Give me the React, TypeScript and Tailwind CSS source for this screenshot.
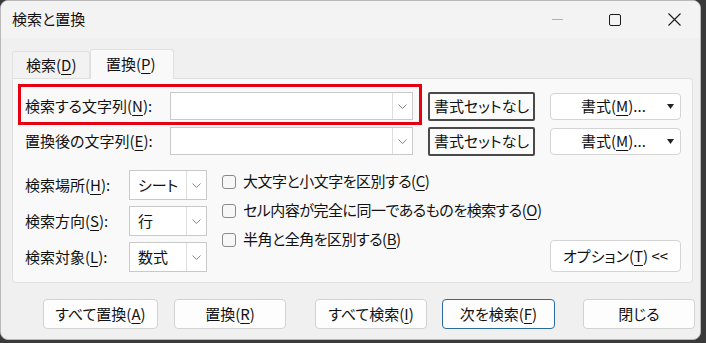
import React from 'react';

const K = ({ c }: { c: string }) => <span className="underline underline-offset-[3px] decoration-1">{c}</span>;

const Chevron = () => (
  <svg width="9" height="5" viewBox="0 0 9 5">
    <path d="M0.5 0.5 L4.5 4.5 L8.5 0.5" fill="none" stroke="#8a8a8a" strokeWidth="1" />
  </svg>
);

const Combo = ({ w, text }: { w: string; text?: string }) => (
  <div className={`${w} h-full flex border border-[#c9c9c9] bg-white`}>
    <div className="flex-1 flex items-center pl-[8px]">{text}</div>
    <div className="w-[20px] flex items-center justify-center border-l border-[#dedede]">
      <Chevron />
    </div>
  </div>
);

const Check = ({ children }: { children: React.ReactNode }) => (
  <div className="h-[29px] flex items-center whitespace-nowrap">
    <div className="w-[14px] h-[14px] shrink-0 border border-[#8a8a8a] rounded-[3px] bg-[#f7f7f7]" />
    <span className="ml-[7px]">{children}</span>
  </div>
);

const FormatBtn = () => (
  <div className="ml-[15px] w-[131px] h-[27px] flex items-center justify-between pl-[30px] pr-[6px] bg-white border border-[#d4d4d4] rounded-[4px]">
    <span>書式(<K c="M" />)...</span>
    <svg width="7" height="5" viewBox="0 0 7 5">
      <path d="M0 0 L7 0 L3.5 5 Z" fill="#222" />
    </svg>
  </div>
);

const ResetBtn = () => (
  <div className="ml-[15px] w-[107px] h-[29px] flex items-center justify-center bg-[#fbfbfb] border-2 border-[#4a4a4a] rounded-[2px]">
    書式セットなし
  </div>
);

const Btn = ({ ml, w, children, primary }: { ml: string; w: string; children: React.ReactNode; primary?: boolean }) => (
  <div
    className={`${ml} ${w} h-[30px] flex items-center justify-center rounded-[4px] bg-[#fdfdfd] border ${
      primary ? 'border-[#2b6a9e]' : 'border-[#d2d2d2]'
    }`}
  >
    {children}
  </div>
);

export default function App() {
  return (
    <div className="relative w-[706px] h-[343px] bg-[#3a3a3a] overflow-hidden font-['Noto_Sans_CJK_JP',sans-serif] text-[15px] text-[#111] [font-feature-settings:'palt']">
      <div className="w-[701px] h-[340px] rounded-[8px] bg-[#f0f0f0] border border-[#b9b9b9] flex flex-col overflow-hidden">
        {/* タイトルバー */}
        <div className="h-[37px] flex items-center bg-[#f3f3f3] pl-[11px]">
          <span>検索と置換</span>
          <div className="ml-auto flex items-center">
            <svg width="11" height="2" viewBox="0 0 11 2" className="mr-[46px]">
              <rect width="11" height="1" fill="#b0b0b0" />
            </svg>
            <svg width="12" height="12" viewBox="0 0 12 12" className="mr-[47px]">
              <rect x="0.5" y="0.5" width="11" height="11" rx="1.5" fill="none" stroke="#1b1b1b" strokeWidth="1" />
            </svg>
            <svg width="13" height="13" viewBox="0 0 13 13" className="mr-[19px]">
              <path d="M0.5 0.5 L12.5 12.5 M12.5 0.5 L0.5 12.5" stroke="#1b1b1b" strokeWidth="1.1" />
            </svg>
          </div>
        </div>

        {/* タブ */}
        <div className="px-[11px] pt-[11px]">
          <div className="flex items-end h-[29px]">
            <div className="w-[78px] h-[27px] flex items-center pl-[13px] border border-b-0 border-[#e2e2e2] rounded-t-[3px] bg-[#f2f2f2]">
              検索(<K c="D" />)
            </div>
            <div className="w-[84px] h-[30px] flex items-center pl-[15px] border border-b-0 border-[#e0e0e0] rounded-t-[3px] bg-[#f9f9f9] relative z-10 -mb-px">
              置換(<K c="P" />)
            </div>
          </div>

          {/* パネル */}
          <div className="w-[681px] h-[205px] border border-[#e0e0e0] rounded-[4px] rounded-tl-none bg-[#f9f9f9] pt-[13px] pl-[12px] pr-[11px]">
            <div className="flex items-center h-[28px]">
              <span className="w-[145px]">検索する文字列(<K c="N" />):</span>
              <Combo w="w-[243px]" />
              <ResetBtn />
              <FormatBtn />
            </div>
            <div className="flex items-center h-[28px] mt-[7px]">
              <span className="w-[145px]">置換後の文字列(<K c="E" />):</span>
              <Combo w="w-[243px]" />
              <ResetBtn />
              <FormatBtn />
            </div>

            <div className="flex mt-[15px] h-[102px]">
              <div className="flex flex-col gap-[6px] shrink-0">
                <div className="flex items-center h-[30px]">
                  <span className="w-[104px]">検索場所(<K c="H" />):</span>
                  <Combo w="w-[78px]" text="シート" />
                </div>
                <div className="flex items-center h-[30px]">
                  <span className="w-[104px]">検索方向(<K c="S" />):</span>
                  <Combo w="w-[78px]" text="行" />
                </div>
                <div className="flex items-center h-[30px]">
                  <span className="w-[104px]">検索対象(<K c="L" />):</span>
                  <Combo w="w-[78px]" text="数式" />
                </div>
              </div>

              <div className="ml-[15px] -mt-[3px] flex flex-col shrink-0 tracking-[-0.5px]">
                <Check>大文字と小文字を区別する(<K c="C" />)</Check>
                <Check>セル内容が完全に同一であるものを検索する(<K c="O" />)</Check>
                <Check>半角と全角を区別する(<K c="B" />)</Check>
              </div>

              <div className="ml-auto self-end w-[131px] h-[32px] shrink-0 flex items-center justify-center bg-white border border-[#d4d4d4] rounded-[4px]">
                オプション(<K c="T" />) &lt;&lt;
              </div>
            </div>
          </div>
        </div>

        {/* 下部ボタン */}
        <div className="flex mt-[16px]">
          <Btn ml="ml-[42px]" w="w-[115px]">すべて置換(<K c="A" />)</Btn>
          <Btn ml="ml-[16px]" w="w-[112px]">置換(<K c="R" />)</Btn>
          <Btn ml="ml-[29px]" w="w-[112px]">すべて検索(<K c="I" />)</Btn>
          <Btn ml="ml-[15px]" w="w-[113px]" primary>次を検索(<K c="F" />)</Btn>
          <Btn ml="ml-[28px]" w="w-[112px]">閉じる</Btn>
        </div>
      </div>

      {/* 赤枠の注記 */}
      <div className="absolute left-[18px] top-[84px] w-[404px] h-[41px] border-[3px] border-[#e50012] pointer-events-none" />
    </div>
  );
}
